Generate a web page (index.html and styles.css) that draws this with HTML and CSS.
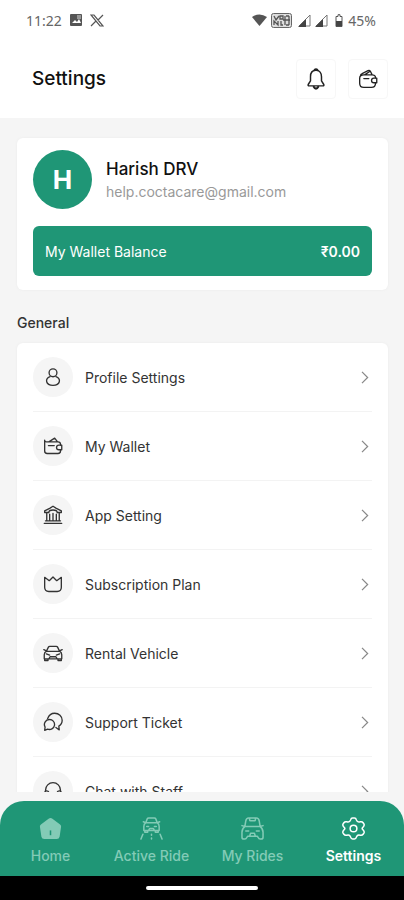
FILE: index.html
```html
<!DOCTYPE html>
<html lang="en">
<head>
<meta charset="utf-8">
<meta name="viewport" content="width=device-width, initial-scale=1">
<title>Settings</title>
<link rel="stylesheet" href="styles.css">
</head>
<body>
<svg class="defs" aria-hidden="true">
  <symbol id="chevron" viewBox="0 0 24 24"><path d="M8 3l9 9-9 9"/></symbol>
  <symbol id="wallet" viewBox="0 0 24 24"><path d="M2 9v9a3 3 0 0 0 3 3h13a3 3 0 0 0 3-3v-1.500M21 11v-1a3 3 0 0 0-3-3H4a2 2 0 0 1-2-2M2 9V5M7 7l7-4.500 3.500 4.500M6.500 11.500h7"/><path d="M22.500 11h-3.500a2.700 2.700 0 0 0 0 5.500h3.500z"/></symbol>
  <symbol id="car" viewBox="0 0 24 24"><path d="M4 10l2.500-5Q7 4 8 4h8q1 0 1.500 1L20 10M4 10h16q2.500 1 2.500 4v5h-21v-5Q1.500 11 4 10zM1 8l3 1.500M23 8l-3 1.500M2 19v2h4v-2M18 19v2h4v-2M4 13l4 1.500M20 13l-4 1.500M7 19l1.500-2.500h7L17 19"/></symbol>
</svg>

<div class="status">
  <div class="status-group">
    <span>11:22</span>
    <svg class="status-icon photo" viewBox="0 0 12 12"><rect width="12" height="12" rx="1" fill="#555"/><path d="M2 9l3-3 2 2 2-3 2 4z" fill="#fff"/><path d="M7 2h4M7 4h4" stroke="#ddd"/></svg>
    <svg class="status-icon x-logo" viewBox="0 0 14 13"><path d="M1 1h3l9 11h-3zM13 1L8 6M6 7l-5 5" fill="none" stroke="#555" stroke-width="1.200"/></svg>
  </div>
  <div class="status-group right">
    <svg class="wifi" viewBox="0 0 15 12"><path d="M0 3q7.500-5 15 0L7.500 12z" fill="#555"/></svg>
    <svg class="volte" viewBox="0 0 21 15"><rect x=".5" y=".5" width="20" height="14" rx="2" fill="#ddd" stroke="#666"/><path d="M3 3l2 4 3-4M3 12V8l4 4V8M9 3h3v3H9zM10 8v4h2M14 3v9M12 7h7M18 3v9M15 3h3M15 12h3" fill="none" stroke="#555" stroke-width="1.300"/></svg>
    <svg class="signal" viewBox="0 0 13 13"><path d="M1 12L12 1v11z" fill="none" stroke="#777"/><path d="M0 13L8 5v8z" fill="#444"/></svg>
    <svg class="signal" viewBox="0 0 13 13"><path d="M1 12L12 1v11z" fill="none" stroke="#777"/><path d="M0 13L8 5v8z" fill="#444"/></svg>
    <svg class="battery" viewBox="0 0 8 13"><path d="M1 2.500h2V.7h2v1.800h2v10H1z" fill="#fff" stroke="#555"/><path d="M1 7h6v5H1z" fill="#444"/></svg>
    <span>45%</span>
  </div>
</div>

<header class="header">
  <h1>Settings</h1>
  <div class="actions">
    <button type="button" aria-label="Notifications"><svg class="line bell" viewBox="0 0 24 24"><path d="M10 3q0-2 2-2t2 2M12 2.500c-4 0-6 3-6 7V14l-2.500 4q-.5 1.500 1 1.500h15q1.500 0 1-1.500L18 14V9.500c0-4-2-7-6-7z"/><path d="M9.500 20.500q1 2 2.500 2t2.500-2" stroke-width="2.200"/></svg></button>
    <button type="button" aria-label="Wallet"><svg class="line purse" viewBox="0 0 24 24"><path d="M21 10.500C21 8 19 7 17 7H7c-3 0-5 1-5 4v6c0 3 2 5 5 5h9c3 0 5-1.500 5-5M3 8q0-2 2-2.500L12 2q2-.7 3 1l2 4M8 7l6-4M7 11.500h6"/><path d="M22.500 11h-3.500a2.700 2.700 0 0 0 0 5.500h3.500z"/></svg></button>
  </div>
</header>

<main class="content">
  <section class="profile card">
    <div class="person">
      <div class="avatar">H</div>
      <div class="identity">
        <h2>Harish DRV</h2>
        <p>help.coctacare@gmail.com</p>
      </div>
    </div>
    <div class="balance"><span>My Wallet Balance</span><strong>₹0.00</strong></div>
  </section>

  <h3 class="section-title">General</h3>
  <ul class="menu card">
    <li><a href="#profile"><span class="disc"><svg class="line" viewBox="0 0 24 24"><circle cx="12" cy="7" r="4.700"/><path d="M8.500 11.500C2 14 3 22 12 22s10-8 3.500-10.500"/></svg></span><span class="label">Profile Settings</span><svg class="chevron"><use href="#chevron"/></svg></a></li>
    <li><a href="#wallet"><span class="disc"><svg class="line"><use href="#wallet"/></svg></span><span class="label">My Wallet</span><svg class="chevron"><use href="#chevron"/></svg></a></li>
    <li><a href="#app"><span class="disc"><svg class="line" viewBox="0 0 24 24"><path d="M1.500 22h21M3 19h18M2 9V7l6-3 4-2.500L16 4l6 3v2h-5M2 9h5M4.500 9v10M8 11v8M12 10v9M16 11v8M19.500 9v10M7 9q0-3 5-3t5 3"/></svg></span><span class="label">App Setting</span><svg class="chevron"><use href="#chevron"/></svg></a></li>
    <li><a href="#plan"><span class="disc"><svg class="line" viewBox="0 0 24 24"><path d="M2 4v12q0 5 5 5h10q5 0 5-5V4l-5.500 4L12 3.500 7.500 8z"/></svg></span><span class="label">Subscription Plan</span><svg class="chevron"><use href="#chevron"/></svg></a></li>
    <li><a href="#rental"><span class="disc"><svg class="line"><use href="#car"/></svg></span><span class="label">Rental Vehicle</span><svg class="chevron"><use href="#chevron"/></svg></a></li>
    <li><a href="#support"><span class="disc"><svg class="line" viewBox="0 0 24 24"><path d="M5.500 8C7 4 10 1.500 14 1.500c5 0 9 3.500 9 8.500 0 3-1.500 5.500-4 7l.5 4.500-4-3"/><path d="M7.500 9a6 6 0 1 1-2 11.500L2 22l.5-4A6 6 0 0 1 7.500 9z"/></svg></span><span class="label">Support Ticket</span><svg class="chevron"><use href="#chevron"/></svg></a></li>
    <li><a href="#chat"><span class="disc"><svg class="line" viewBox="0 0 24 24"><path d="M3 13v-2a9 9 0 0 1 18 0v2M3 12q4-1 4 3t-1 4q-4 0-4-4 0-2 1-3zM21 12q-4-1-4 3t1 4q4 0 4-4 0-2-1-3zM19 19q-1 3-6 3"/></svg></span><span class="label">Chat with Staff</span><svg class="chevron"><use href="#chevron"/></svg></a></li>
  </ul>
</main>

<nav class="tabs">
  <a href="#home"><svg viewBox="0 0 24 24"><path d="M12 1q1 0 2 .8l8 6q1.500 1 1 2.700l-1.500 10Q21 23 18.500 23h-13Q3 23 2.500 20.500L1 10.500q-.5-1.700 1-2.700l8-6Q11 1 12 1z" fill="currentColor"/><path d="M12 14v5" stroke="#1f9676" stroke-width="1.600"/></svg>Home</a>
  <a href="#active"><svg class="line" viewBox="0 0 24 24"><path d="M6 6l1.500-4Q8 1 9 1h6q1 0 1.500 1L18 6M6 6h12q2 1 2 4v4H4v-4q0-3 2-4zM3.500 5L6 6M20.500 5L18 6M5 14v2h3v-2M16 14v2h3v-2M7 10h2M15 10h2M9 14l1-2h4l1 2M3 18l-2 5M21 18l2 5M12 18v1M12 22v1"/></svg>Active Ride</a>
  <a href="#rides"><svg class="line" viewBox="0 0 24 24"><path d="M4 10l1-6q.5-3 3-3h8q2.500 0 3 3l1 6M4 10h16q3 2 3 6v5q0 2-2 2h-1q-1.500 0-2-1.500L17 20H7l-1 1.500Q5.500 23 4 23H3q-2 0-2-2v-5q0-4 3-6zM9 1v2q0 1 1 1h4q1 0 1-1V1M1 9l3 1M23 9l-3 1M5 14.500h3M16 14.500h3M9 20l1-3h4l1 3"/></svg>My Rides</a>
  <a class="active" href="#settings" aria-current="page"><svg class="line" viewBox="0 0 24 24"><path d="M9 3Q9.500 1 11 1h2q1.500 0 2 2 1 3 4 2 2-.5 3 1l1 1.500q.5 1.500-1 3-2 1.500 0 3 1.500 1.500 1 3L22 18q-1 1.500-3 1-3-1-4 2-.5 2-2 2h-2q-1.500 0-2-2-1-3-4-2-2 .5-3-1l-1-1.500q-.5-1.500 1-3 2-1.500 0-3-1.500-1.500-1-3L2 6q1-1.500 3-1 3 1 4-2z"/><circle cx="12" cy="12" r="3.500"/></svg>Settings</a>
</nav>
<div class="gesture"><span></span></div>
</body>
</html>
```
FILE: styles.css
```css
* { box-sizing: border-box; }

body {
  margin: 0;
  height: 100vh;
  display: flex;
  flex-direction: column;
  background: #f5f5f5;
  color: #333;
  font-family: Inter, "Liberation Sans", sans-serif;
}

h1, h2, h3, p, ul { margin: 0; padding: 0; font-weight: 500; }
ul { list-style: none; }
a { color: inherit; text-decoration: none; }
svg { display: block; flex: none; }
.defs { position: absolute; width: 0; height: 0; }

.line {
  fill: none;
  stroke: currentColor;
  stroke-width: 1.6;
  stroke-linecap: round;
  stroke-linejoin: round;
}

.status {
  flex: none;
  display: flex;
  justify-content: space-between;
  height: 40px;
  padding: 0 28px 0 26px;
  background: #fff;
  color: #666;
  font-family: "Noto Sans", sans-serif;
  font-size: 14px;
}
.status-group { display: flex; align-items: center; gap: 8px; }
.status-group.right { gap: 4px; }
.photo { width: 12px; height: 12px; }
.x-logo { width: 14px; height: 13px; }
.wifi { width: 15px; height: 12px; }
.volte { width: 21px; height: 15px; margin-right: 2px; }
.signal { width: 13px; height: 13px; }
.battery { width: 10px; height: 13px; margin-left: 2px; }

.header {
  flex: none;
  display: flex;
  align-items: center;
  justify-content: space-between;
  height: 78px;
  padding: 0 16px 0 32px;
  background: #fff;
  color: #111;
}
.header h1 { font-size: 19px; line-height: 24px; }
.actions { display: flex; gap: 12px; }
.actions button {
  display: grid;
  place-items: center;
  width: 40px;
  height: 40px;
  padding: 0;
  border: 1px solid #f7f7f7;
  border-radius: 4px;
  background: #fff;
  color: #222;
}
.bell { width: 22px; height: 22px; }
.purse { width: 20px; height: 20px; }

.content {
  flex: 1;
  min-height: 0;
  padding: 20px 16px 0 17px;
  overflow-y: auto;
  scrollbar-width: none;
}
.card {
  border-radius: 6px;
  background: #fff;
  box-shadow: 0 0 3px #ececec;
}

.profile { padding: 12px 16px 14px; }
.person { display: flex; align-items: center; gap: 14px; }
.avatar {
  display: grid;
  place-items: center;
  width: 59px;
  height: 59px;
  border-radius: 50%;
  background: #1f9676;
  color: #fff;
  font-size: 26px;
  font-weight: 700;
}
.identity h2 { color: #111; font-size: 17px; line-height: 24px; }
.identity p { color: #999; font-size: 14px; font-weight: 400; line-height: 22px; }
.balance {
  display: flex;
  align-items: center;
  justify-content: space-between;
  height: 50px;
  margin-top: 17px;
  padding: 0 12px;
  border-radius: 6px;
  background: #1f9676;
  color: #fff;
  font-size: 14px;
}
.balance strong { font-weight: 600; }

.section-title {
  margin: 23px 0 10px;
  font-size: 14px;
  font-weight: 500;
  line-height: 20px;
}

.menu { padding: 0 16px; }
.menu li + li { border-top: 1px solid #f3f3f3; }
.menu a {
  display: flex;
  align-items: center;
  height: 68px;
  font-size: 14px;
  font-weight: 400;
}
.disc {
  display: grid;
  place-items: center;
  width: 40px;
  height: 40px;
  margin-right: 12px;
  border-radius: 50%;
  background: #f5f5f5;
}
.disc svg { width: 20px; height: 20px; }
.label { flex: 1; }
.chevron {
  width: 15px;
  height: 15px;
  fill: none;
  stroke: #888;
  stroke-width: 2;
}

.tabs {
  flex: none;
  display: grid;
  grid-template-columns: repeat(4, 1fr);
  height: 75px;
  margin-top: 9px;
  padding-top: 16px;
  border-radius: 24px 24px 0 0;
  background: #1f9676;
  color: #83cbb6;
  font-size: 14px;
  font-weight: 500;
}
.tabs a {
  display: flex;
  flex-direction: column;
  align-items: center;
  gap: 7px;
  line-height: 18px;
}
.tabs svg { width: 23px; height: 23px; }
.tabs .active { color: #fff; font-weight: 600; }

.gesture {
  flex: none;
  display: grid;
  place-items: center;
  height: 24px;
  background: #000;
}
.gesture span { width: 112px; height: 4px; border-radius: 2px; background: #fff; }
```
